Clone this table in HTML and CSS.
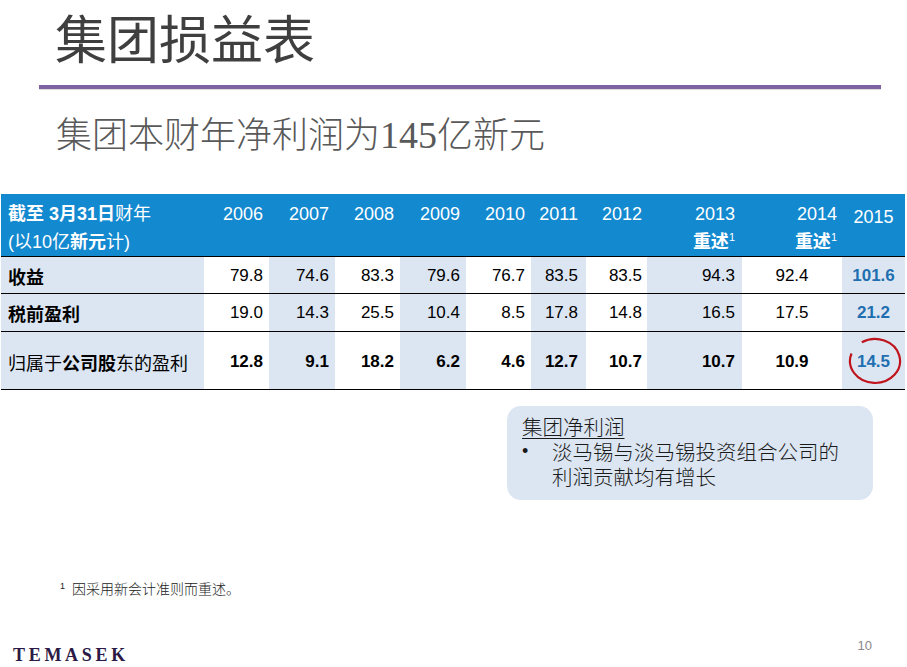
FILE: index.html
```html
<!DOCTYPE html>
<html lang="zh-CN">
<head>
<meta charset="utf-8">
<title>集团损益表</title>
<link rel="stylesheet" href="styles.css">
</head>
<body>
<div class="slide">
  <h1 class="title">集团损益表</h1>
  <div class="rule"></div>
  <h2 class="subtitle">集团本财年净利润为<span class="num">145</span>亿新元</h2>

  <table class="pl">
    <colgroup>
      <col class="c-label"><col class="c-a"><col class="c-b"><col class="c-a"><col class="c-b"><col class="c-a"><col class="c-c"><col class="c-d"><col class="c-e"><col class="c-f"><col class="c-g">
    </colgroup>
    <thead>
      <tr>
        <th class="label"><b>截至 3月31日</b>财年<br>(以10亿<b>新元</b>计)</th>
        <th>2006</th>
        <th>2007</th>
        <th>2008</th>
        <th>2009</th>
        <th>2010</th>
        <th class="p8">2011</th>
        <th class="p5">2012</th>
        <th class="p7">2013<br><b>重述<sup>1</sup></b></th>
        <th class="p5">2014<br><b>重述<sup>1</sup></b></th>
        <th class="ctr low">2015</th>
      </tr>
    </thead>
    <tbody>
      <tr class="r1">
        <td class="label alt"><b>收益</b></td>
        <td>79.8</td>
        <td class="alt">74.6</td>
        <td>83.3</td>
        <td class="alt">79.6</td>
        <td>76.7</td>
        <td class="alt p8">83.5</td>
        <td class="p5">83.5</td>
        <td class="alt p7">94.3</td>
        <td class="ctr">92.4</td>
        <td class="alt ctr hl">101.6</td>
      </tr>
      <tr class="r2">
        <td class="label alt"><b>税前盈利</b></td>
        <td>19.0</td>
        <td class="alt">14.3</td>
        <td>25.5</td>
        <td class="alt">10.4</td>
        <td>8.5</td>
        <td class="alt p8">17.8</td>
        <td class="p5">14.8</td>
        <td class="alt p7">16.5</td>
        <td class="ctr">17.5</td>
        <td class="alt ctr hl">21.2</td>
      </tr>
      <tr class="r3">
        <td class="label alt">归属于<b>公司股</b>东的盈利</td>
        <td><b>12.8</b></td>
        <td class="alt"><b>9.1</b></td>
        <td><b>18.2</b></td>
        <td class="alt"><b>6.2</b></td>
        <td><b>4.6</b></td>
        <td class="alt p8"><b>12.7</b></td>
        <td class="p5"><b>10.7</b></td>
        <td class="alt p7"><b>10.7</b></td>
        <td class="ctr"><b>10.9</b></td>
        <td class="alt ctr hl circled">14.5<svg class="ring" width="54" height="48" viewBox="0 0 54 48"><path d="M13.8 5.3 A25 22 0 1 1 3.5 16.5" fill="none" stroke="#c0141c" stroke-width="2.2"/></svg></td>
      </tr>
    </tbody>
  </table>

  <div class="callout">
    <div class="callout-title">集团净利润</div>
    <div class="bullet"><span class="dot">•</span><span class="btext">淡马锡与淡马锡投资组合公司的<br>利润贡献均有增长</span></div>
  </div>

  <p class="footnote"><sup>1</sup>因采用新会计准则而重述。</p>

  <div class="footer">
    <span class="logo">TEMASEK</span>
    <span class="page">10</span>
  </div>
</div>
</body>
</html>
```

FILE: styles.css
```css
html, body {
  margin: 0;
  padding: 0;
  background: #ffffff;
}
body {
  width: 907px;
  height: 667px;
  overflow: hidden;
  font-family: "Liberation Sans", "Noto Sans CJK SC", sans-serif;
}
.slide {
  display: flex;
  flex-direction: column;
  width: 907px;
  height: 667px;
}
.title {
  margin: 0 0 0 55px;
  padding-top: 0;
  font-family: "Noto Sans CJK SC", sans-serif;
  font-weight: 400;
  font-size: 52px;
  line-height: 74px;
  color: #3f3f3f;
}
.rule {
  margin: 11px 0 0 39px;
  width: 842px;
  height: 4px;
  background: #7f63a1;
  box-shadow: 0 1px 1px rgba(0,0,0,0.15);
}
.subtitle {
  margin: 21px 0 0 56px;
  font-family: "Noto Sans CJK SC", sans-serif;
  font-weight: 300;
  font-size: 36px;
  line-height: 44px;
  color: #595959;
}
.subtitle .num {
  font-family: "Liberation Serif", serif;
  font-size: 38px;
}
.pl {
  margin: 37px 0 0 1px;
  width: 904px;
  border-collapse: collapse;
  table-layout: fixed;
  font-size: 17px;
  color: #000;
}
.c-label { width: 203px; }
.c-a { width: 65px; }
.c-b { width: 66px; }
.c-c { width: 55px; }
.c-d { width: 61px; }
.c-e { width: 95px; }
.c-f { width: 100px; }
.c-g { width: 63px; }
.pl th {
  background: #1389d0;
  color: #fff;
  font-weight: 400;
  font-size: 18px;
  line-height: 28px;
  text-align: right;
  vertical-align: top;
  padding: 6px 6px 0 0;
  height: 53px;
  border-bottom: 1px solid #000;
  white-space: nowrap;
}
.pl th b { font-weight: 700; }
.pl th.label {
  text-align: left;
  padding-left: 7px;
}
.pl th sup {
  font-size: 11px;
  line-height: 0;
  vertical-align: 7px;
  font-weight: 400;
}
.pl th.low { padding-top: 9px; height: 50px; }
.pl td {
  padding: 0 6px 0 0;
  text-align: right;
  vertical-align: middle;
  border-top: 1px solid #000;
  white-space: nowrap;
}
.pl td.label {
  text-align: left;
  padding-left: 7px;
  font-size: 18px;
}
.pl td b { font-weight: 700; }
.pl .alt { background: #dce6f2; }
.pl .p8 { padding-right: 8px; }
.pl .p5 { padding-right: 5px; }
.pl .p7 { padding-right: 7px; }
.pl .ctr { text-align: center; padding-right: 0; }
.pl .hl { color: #1f6fb0; font-weight: 700; }
.pl tr.r1 td { height: 34px; padding-top: 2px; }
.pl tr.r2 td { height: 37px; }
.pl tr.r3 td { height: 54px; border-bottom: 1px solid #000; padding-top: 3px; }
.pl td.circled { position: relative; }
.ring {
  position: absolute;
  left: 6px;
  top: 5px;
}
.callout {
  margin: 16px 0 0 507px;
  width: 366px;
  height: 94px;
  box-sizing: border-box;
  background: #dce6f2;
  border-radius: 14px;
  padding: 8px 0 0 15px;
  font-family: "Noto Sans CJK SC", sans-serif;
  font-weight: 300;
  color: #1a1a1a;
  font-size: 20.5px;
  line-height: 25px;
}
.callout-title {
  text-decoration: underline;
  text-underline-offset: 3px;
  text-decoration-thickness: 1px;
}
.bullet {
  display: flex;
}
.dot {
  width: 30px;
  flex: none;
  font-family: "Liberation Sans", sans-serif;
  font-size: 18px;
}
.footnote {
  margin: 78px 0 0 60px;
  font-family: "Noto Sans CJK SC", sans-serif;
  font-weight: 300;
  font-size: 14px;
  line-height: 20px;
  color: #222;
}
.footnote sup {
  font-family: "Liberation Sans", sans-serif;
  font-size: 9px;
  vertical-align: 5px;
  line-height: 0;
  margin-right: 7px;
}
.footer {
  margin-top: auto;
  display: flex;
  justify-content: space-between;
  align-items: flex-end;
  padding: 0 35px 2px 13px;
}
.logo {
  font-family: "Liberation Serif", serif;
  font-weight: 700;
  font-size: 18px;
  letter-spacing: 3.7px;
  color: #2b1a45;
  line-height: 20px;
}
.page {
  font-family: "Liberation Sans", sans-serif;
  font-size: 13px;
  color: #8a8a8a;
  line-height: 20px;
  margin-bottom: 9px;
}
```
